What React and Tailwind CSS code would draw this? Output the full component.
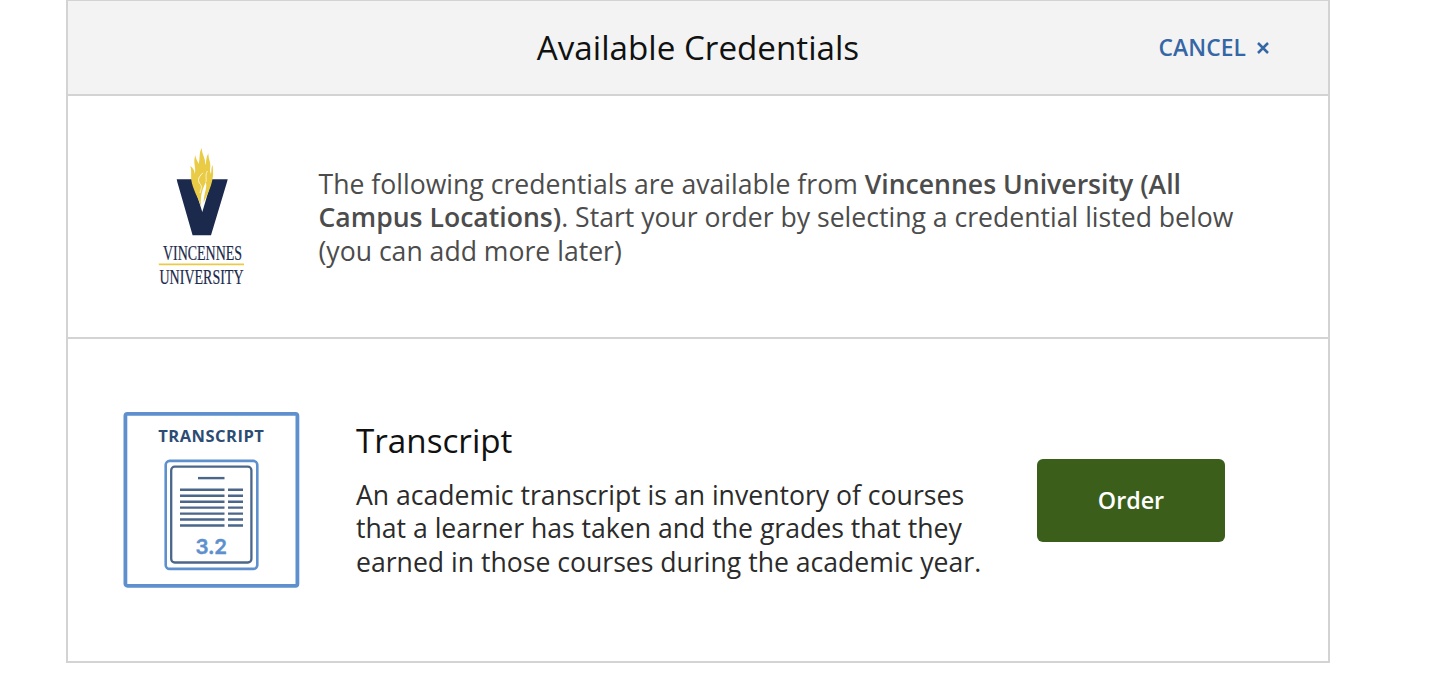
function VincennesLogo() {
  return (
    <svg className="block h-[142px] w-[90px] overflow-visible" viewBox="0 0 90 142" role="img" aria-label="Vincennes University">
      <path d="M19.700 32.300H35L45.300 65L55 32.300H70.700L70 35L54 88.200H35.600L20.300 35Z" fill="#1b2a4c" />
      <path
        d="M44.300 60C41 50 35.500 42 34.300 33C33.800 27 34.800 24 33.200 19C36 21 37.500 23 37.800 27C39.500 20 35.500 16 38.500 8C38.500 12 41 14 41.500 17C43.500 11 41.500 6 44.800 1C44.500 7 49 11 48 18C50 15 48.500 10 51.500 6.500C51 12 54.500 15 53 22C52.800 24 53.500 25 53.800 27C55.200 24 53.500 21 55.800 18C55.500 23 57 26 55.300 33C53.500 42 50 48 46.500 56C47 46 50.500 40 48.800 35C46.500 41 42.500 47 44.300 60Z"
        fill="#e9cb45"
      />
      <path d="M45.800 26C40.500 31 40.500 34 43.500 37.500C45.500 40 43.500 43 43 46" fill="none" stroke="#fff" strokeWidth=".8" />
      <path d="M50.500 24C47.800 28 49.800 31 49 35" fill="none" stroke="#fff" strokeWidth=".7" />
      <text x="6" y="113" textLength="79" lengthAdjust="spacingAndGlyphs" fontSize="20" fill="#1b2a4c" stroke="#1b2a4c" strokeWidth=".2" fontFamily="Liberation Serif, serif">VINCENNES</text>
      <path d="M1.800 117.300H87" stroke="#e9cb45" strokeWidth="1.700" />
      <text x="2.500" y="136.500" textLength="84" lengthAdjust="spacingAndGlyphs" fontSize="20" fill="#1b2a4c" stroke="#1b2a4c" strokeWidth=".2" fontFamily="Liberation Serif, serif">UNIVERSITY</text>
    </svg>
  );
}

const ROWS = [78.8, 84.8, 90.8, 96.6, 102.6, 108.5, 114.5];

function TranscriptBadge() {
  return (
    <svg className="block h-[177px] w-[177px]" viewBox="0 0 177 177" role="img" aria-label="Transcript">
      <rect x="2.400" y="2.800" width="172" height="172" rx="2" fill="#fff" stroke="#5d90cd" strokeWidth="3.800" />
      <text x="35.300" y="31" textLength="105.500" fontSize="16.500" fontWeight="700" fill="#2d4c73" fontFamily="Open Sans, sans-serif">TRANSCRIPT</text>
      <rect x="42.700" y="49.900" width="91.600" height="108" rx="4" fill="none" stroke="#5d90cd" strokeWidth="2.600" />
      <rect x="48.200" y="55.700" width="80.200" height="95.800" rx="3.500" fill="none" stroke="#4a6789" strokeWidth="2.300" />
      <path d="M75 67.100H101.500" stroke="#4a6789" strokeWidth="2.400" />
      {ROWS.map((y) => (
        <path key={y} d={`M57 ${y}H101.500M105 ${y}H120`} stroke="#4a6789" strokeWidth="2.400" />
      ))}
      <text x="72.500" y="142.500" textLength="31.500" fontSize="20.500" fontWeight="600" fill="#5d90cd" stroke="#5d90cd" strokeWidth=".4" fontFamily="Inter, sans-serif">3.2</text>
    </svg>
  );
}

export default function App() {
  return (
    <div className="h-[700px] w-[1430px] overflow-hidden bg-white pl-[66px] font-['Open_Sans',sans-serif]">
      <main className="h-[663px] w-[1264px] border-2 border-t-1 border-[#d3d3d3]">
        <header className="grid h-[95px] grid-cols-[1fr_auto_1fr] items-center border-b-2 border-[#d3d3d3] bg-[#f3f3f3] pr-[59px]">
          <h1 className="col-start-2 ml-[59px] text-[33.200px] leading-[46px] whitespace-nowrap text-[#111]">Available Credentials</h1>
          <button className="flex items-center gap-[11px] justify-self-end text-[22.800px] font-semibold text-[#3566a5]">
            <span className="pt-[2px] tracking-[0.1px]">CANCEL</span>
            <svg className="h-[12px] w-[12px]" viewBox="0 0 12 12" fill="none" stroke="currentColor" strokeWidth="2.500">
              <path d="M1 1L11 11M11 1L1 11" />
            </svg>
          </button>
        </header>
        <section className="flex h-[243px] border-b-2 border-[#d3d3d3] pt-[51px] pl-[89px]">
          <VincennesLogo />
          <p className="mt-[21px] ml-[71.500px] text-[26.600px] leading-[33.400px] whitespace-nowrap text-[#4c4c4c]">
            The following credentials are available from <b className="font-semibold">Vincennes University (All</b>
            <br />
            <b className="font-semibold">Campus Locations)</b>. Start your order by selecting a credential listed below
            <br />
            (you can add more later)
          </p>
        </section>
        <section className="flex h-[321px] pt-[72px] pl-[55px]">
          <TranscriptBadge />
          <div className="ml-[56px] w-[681px] whitespace-nowrap">
            <h2 className="mt-[7px] text-[33.200px] leading-[46px] text-[#111]">Transcript</h2>
            <p className="mt-[15px] text-[26.600px] leading-[33.400px] text-[#2b2b2b]">
              An academic transcript is an inventory of courses
              <br />
              that a learner has taken and the grades that they
              <br />
              earned in those courses during the academic year.
            </p>
          </div>
          <button className="mt-[48px] h-[83px] w-[188px] rounded-[6px] bg-[#3b5f1a] text-[23.300px] font-semibold text-white">Order</button>
        </section>
      </main>
    </div>
  );
}
